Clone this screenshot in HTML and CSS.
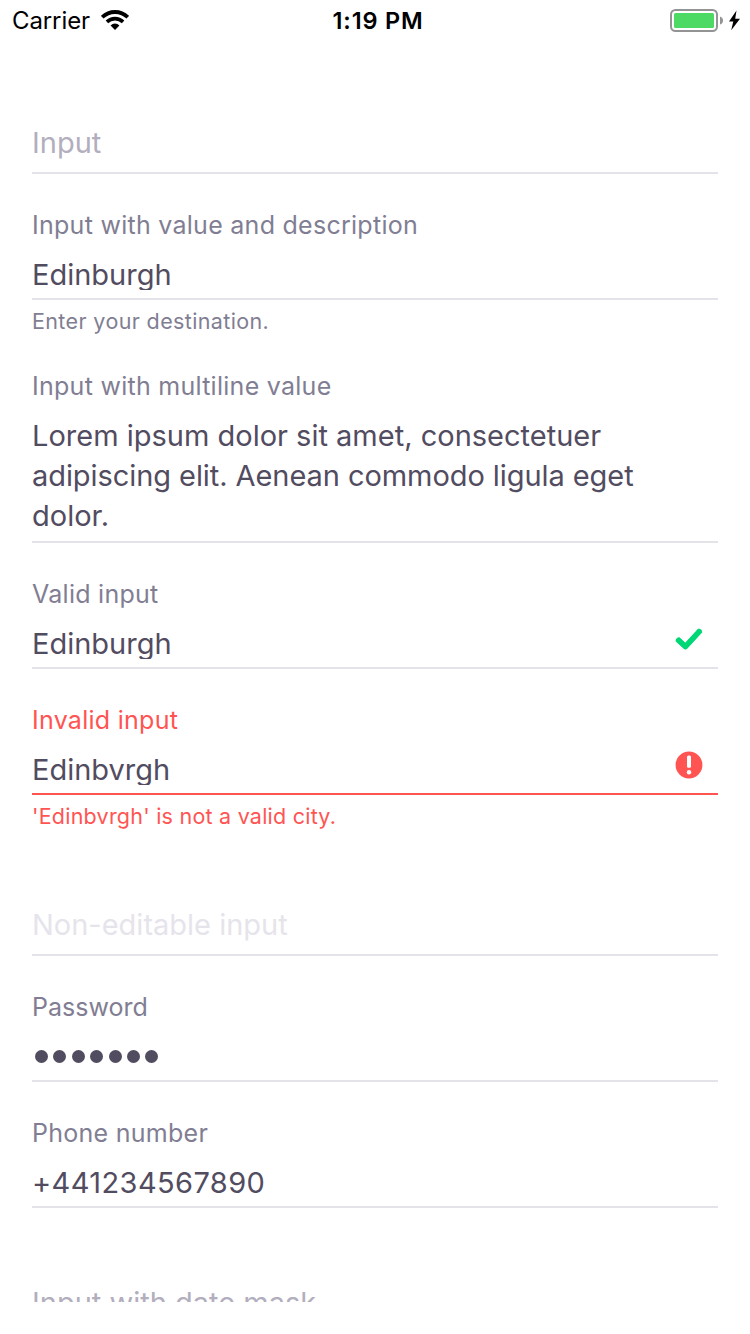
FILE: index.html
```html
<!DOCTYPE html>
<html lang="en">
<head>
<meta charset="utf-8">
<title>Text inputs</title>
<link rel="stylesheet" href="styles.css">
</head>
<body>
<div class="screen">
  <header class="status">
    <div class="status-left">
      <span class="carrier">Carrier</span>
      <svg class="wifi" width="28" height="20" viewBox="0 0 28 20" fill="none" stroke="#000">
        <path d="M1.2 7.2A18.3 18.3 0 0 1 26.8 7.2" stroke-width="3.8"/>
        <path d="M5.9 11.9A11.6 11.6 0 0 1 22.1 11.9" stroke-width="3.6"/>
        <path d="M9.6 15.4A6.2 6.2 0 0 1 18.4 15.4L14 19.9Z" fill="#000" stroke="none"/>
      </svg>
    </div>
    <span class="time">1:19 PM</span>
    <svg class="battery" width="72" height="24" viewBox="0 0 72 24">
      <rect x="1" y="1" width="46" height="21" rx="4.5" fill="none" stroke="#949494" stroke-width="2"/>
      <rect x="4" y="4" width="40" height="15" rx="1.5" fill="#4cd964"/>
      <path d="M50 7.5Q53 8.5 53 11.5T50 15.5Z" fill="#949494"/>
      <path d="M66.5 1.5L59 12.4H63.3L61.2 21.2L70 9.7H65.2Z" fill="#000"/>
    </svg>
  </header>
  <main class="form">
    <section class="field">
      <p class="placeholder">Input</p>
    </section>
    <section class="field">
      <p class="label">Input with value and description</p>
      <p class="value">Edinburgh</p>
    </section>
    <p class="hint">Enter your destination.</p>
    <section class="field multi">
      <p class="label">Input with multiline value</p>
      <p class="value">Lorem ipsum dolor sit amet, consectetuer<br><span class="tight">adipiscing elit. Aenean commodo ligula eget</span><br>dolor.</p>
    </section>
    <section class="field">
      <p class="label">Valid input</p>
      <div class="row">
        <p class="value">Edinburgh</p>
        <svg class="icon" width="28" height="28" viewBox="0 0 28 28" fill="none" stroke="#00d775" stroke-width="5.4" stroke-linejoin="round"><path d="M2.2 14.1L10.4 21.6L25.3 5.4"/><path d="M3.4 15.2L10.4 21.6L24.4 6.4" stroke-width="5" stroke-linecap="round"/></svg>
      </div>
    </section>
    <section class="field invalid">
      <p class="label">Invalid input</p>
      <div class="row">
        <p class="value">Edinbvrgh</p>
        <svg class="icon" width="28" height="28" viewBox="0 0 28 28"><circle cx="14" cy="14" r="13.4" fill="#ff5452"/><rect x="12" y="4.5" width="4" height="12.3" rx="1.5" fill="#fff"/><circle cx="14" cy="21.3" r="2.2" fill="#fff"/></svg>
      </div>
    </section>
    <p class="hint error">'Edinbvrgh' is not a valid city.</p>
    <section class="field">
      <p class="placeholder disabled">Non-editable input</p>
    </section>
    <section class="field">
      <p class="label plain">Password</p>
      <div class="value dots"><i></i><i></i><i></i><i></i><i></i><i></i><i></i></div>
    </section>
    <section class="field">
      <p class="label">Phone number</p>
      <p class="value number">+441234567890</p>
    </section>
    <section class="field">
      <p class="placeholder">Input with date mask</p>
    </section>
  </main>
</div>
</body>
</html>
```

FILE: styles.css
```css
* { box-sizing: border-box; }
body { margin: 0; background: #fff; font-family: Inter, "Liberation Sans", sans-serif; }
p { margin: 0; white-space: nowrap; }
.screen { width: 750px; height: 1334px; overflow: hidden; background: #fff; }
.status { height: 40px; padding: 0 8px 0 12px; display: grid; grid-template-columns: 1fr auto 1fr; color: #000; font-size: 24px; line-height: 42px; }
.status-left { display: flex; gap: 12px; }
.carrier { width: 77px; letter-spacing: -0.1px; white-space: nowrap; }
.wifi { margin-top: 10px; }
.time { font-weight: 600; font-size: 23.5px; letter-spacing: 0.8px; margin-left: 2px; }
.battery { justify-self: end; margin-top: 9px; }
.form { height: 1262px; padding: 8px 32px 0; overflow: hidden; }
.field { height: 126px; padding-top: 31px; border-bottom: 2px solid #e4e3ea; }
.multi { height: 208px; }
.label { height: 49px; line-height: 40px; font-size: 25px; letter-spacing: 0.27px; color: #817e93; }
.plain { letter-spacing: 0; }
.value { height: 36px; line-height: 42px; font-size: 29px; color: #524c61; overflow: hidden; }
.multi .value { height: 120px; line-height: 40px; margin-top: 1px; }
.tight { letter-spacing: -0.07px; }
.number { letter-spacing: 0.4px; }
.placeholder { margin-top: 44px; line-height: 40px; font-size: 29px; color: #b2aebd; }
.disabled { color: #e6e4eb; }
.row { display: flex; justify-content: space-between; padding-right: 15px; }
.icon { margin-top: 2px; }
.hint { height: 35px; line-height: 42px; font-size: 21.5px; letter-spacing: 0.37px; color: #817e93; }
.error { letter-spacing: 0.23px; }
.invalid { border-color: #ff5452; }
.invalid .label, .error { color: #ff5452; }
.dots { display: flex; gap: 5.4px; padding: 14px 0 0 3px; }
.dots i { width: 13px; height: 13px; border-radius: 50%; background: #524c61; }
```
